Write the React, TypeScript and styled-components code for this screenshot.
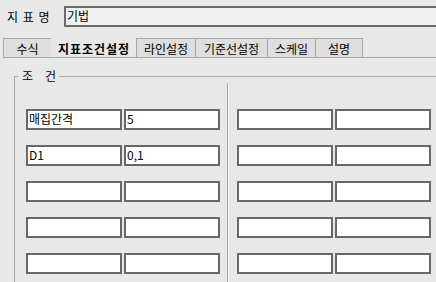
import React from 'react';
import styled, { createGlobalStyle } from 'styled-components';

const GlobalStyle = createGlobalStyle`
  html, body {
    margin: 0;
    padding: 0;
    background: #e8e8e8;
    overflow: hidden;
  }
  #root {
    width: 436px;
    height: 282px;
    overflow: hidden;
  }
`;

const Page = styled.div`
  width: 470px;
  font-family: 'Noto Sans CJK KR', 'Noto Sans', sans-serif;
  font-size: 12px;
  color: #000;
  padding-top: 6px;
`;

const NameRow = styled.div`
  display: flex;
  align-items: center;
  height: 21px;
`;

const NameLabel = styled.span`
  width: 57px;
  padding-left: 7px;
  letter-spacing: 1px;
  white-space: pre;
`;

const NameField = styled.div`
  flex: 1;
  height: 21px;
  box-sizing: border-box;
  border: 2px solid #6a6a6a;
  border-right: none;
  background: #f0f0f0;
  padding-left: 1px;
  line-height: 16px;
`;

const TabStrip = styled.div`
  display: flex;
  margin: 11px 0 0 3px;
  border-bottom: 1px solid #a8a8a8;
`;

const Tab = styled.div<{ $w: number; $active?: boolean }>`
  width: ${p => p.$w}px;
  height: 19px;
  box-sizing: border-box;
  display: flex;
  align-items: center;
  justify-content: center;
  background: ${p => (p.$active ? '#e8e8e8' : '#dedede')};
  border-top: 1px solid ${p => (p.$active ? 'transparent' : '#a8a8a8')};
  border-left: 1px solid ${p => (p.$active ? 'transparent' : '#a8a8a8')};
  font-weight: ${p => (p.$active ? 700 : 400)};
  letter-spacing: ${p => (p.$active ? 1 : 0)}px;
  &:last-child {
    border-right: 1px solid #a8a8a8;
  }
`;

const Group = styled.section`
  display: flex;
  flex-direction: column;
  margin: 11px 0 0 14px;
`;

const GroupHead = styled.div`
  display: flex;
  align-items: center;
  height: 14px;
  margin-bottom: -7px;
  position: relative;
  z-index: 1;
`;

const HeadLine = styled.div<{ $w?: number }>`
  ${p => (p.$w ? `width: ${p.$w}px;` : 'flex: 1;')}
  height: 0;
  border-top: 1px solid #a8a8a8;
`;

const GroupTitle = styled.span`
  padding: 0 3px;
  line-height: 14px;
  white-space: pre;
`;

const GroupBody = styled.div`
  border-left: 1px solid #a8a8a8;
  padding-top: 7px;
`;

const Columns = styled.div`
  display: flex;
`;

const Column = styled.div<{ $divided?: boolean }>`
  display: flex;
  flex-direction: column;
  gap: 15px;
  padding: 26px 0 20px ${p => (p.$divided ? 9 : 11)}px;
  margin-right: ${p => (p.$divided ? 0 : 7)}px;
  border-left: ${p => (p.$divided ? '1px solid #a8a8a8' : 'none')};
  box-shadow: ${p => (p.$divided ? 'inset 1px 0 0 #f8f8f8' : 'none')};
`;

const Row = styled.div`
  display: flex;
  gap: 2px;
`;

const Cell = styled.div`
  width: 96px;
  height: 21px;
  box-sizing: border-box;
  border: 2px solid #686868;
  background: #fff;
  padding-left: 1px;
  line-height: 16px;
  white-space: nowrap;
`;

const leftRows = [
  ['매집간격', '5'],
  ['D1', '0,1'],
  ['', ''],
  ['', ''],
  ['', ''],
];

const tabs = [
  { label: '수식', w: 48 },
  { label: '지표조건설정', w: 85, active: true },
  { label: '라인설정', w: 59 },
  { label: '기준선설정', w: 72 },
  { label: '스케일', w: 48 },
  { label: '설명', w: 48 },
];

export default function App() {
  return (
    <>
      <GlobalStyle />
      <Page>
        <NameRow>
          <NameLabel>지 표 명</NameLabel>
          <NameField>기법</NameField>
        </NameRow>
        <TabStrip>
          {tabs.map(t => (
            <Tab key={t.label} $w={t.w} $active={t.active}>
              {t.label}
            </Tab>
          ))}
        </TabStrip>
        <Group>
          <GroupHead>
            <HeadLine $w={5} />
            <GroupTitle>{'조\u3000건'}</GroupTitle>
            <HeadLine />
          </GroupHead>
          <GroupBody>
            <Columns>
              <Column>
                {leftRows.map((r, i) => (
                  <Row key={i}>
                    <Cell>{r[0]}</Cell>
                    <Cell>{r[1]}</Cell>
                  </Row>
                ))}
              </Column>
              <Column $divided>
                {leftRows.map((_, i) => (
                  <Row key={i}>
                    <Cell />
                    <Cell />
                  </Row>
                ))}
              </Column>
            </Columns>
          </GroupBody>
        </Group>
      </Page>
    </>
  );
}
